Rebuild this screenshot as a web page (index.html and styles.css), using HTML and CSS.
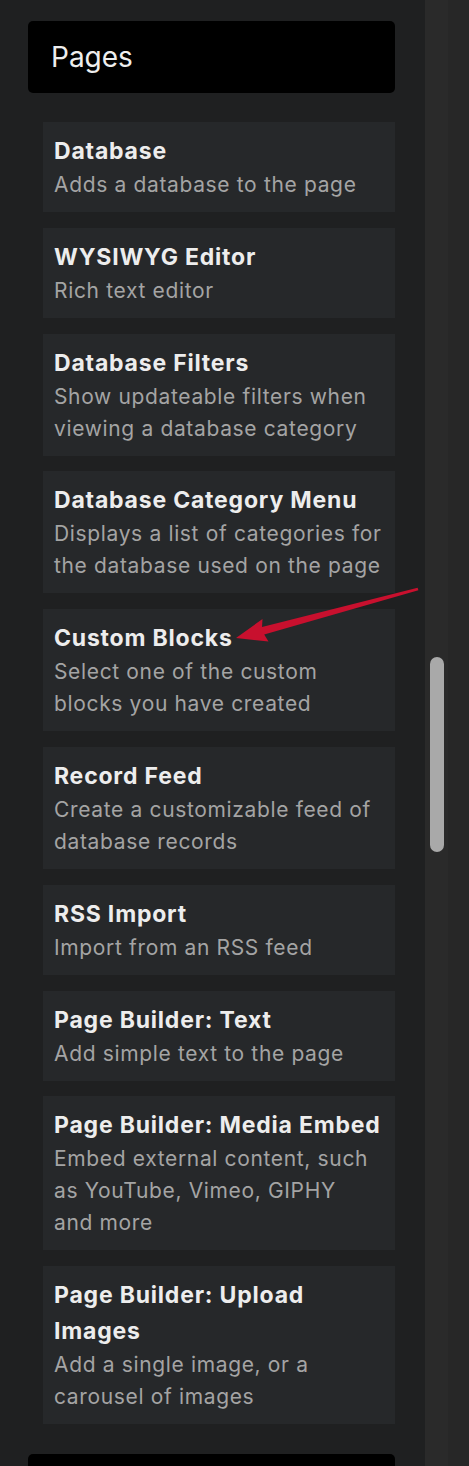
FILE: index.html
```html
<!DOCTYPE html>
<html lang="en">
<head>
<meta charset="utf-8">
<title>Pages</title>
<link rel="stylesheet" href="styles.css">
</head>
<body>
<div class="app">
  <aside class="sidebar">
    <div class="panel-head">Pages</div>
    <ul class="blocks">
      <li class="block"><div class="block-title">Database</div><div class="block-desc">Adds a database to the page</div></li>
      <li class="block"><div class="block-title">WYSIWYG Editor</div><div class="block-desc">Rich text editor</div></li>
      <li class="block"><div class="block-title">Database Filters</div><div class="block-desc">Show updateable filters when viewing a database category</div></li>
      <li class="block"><div class="block-title">Database Category Menu</div><div class="block-desc">Displays a list of categories for the database used on the page</div></li>
      <li class="block"><div class="block-title">Custom Blocks</div><div class="block-desc">Select one of the custom blocks you have created</div></li>
      <li class="block"><div class="block-title">Record Feed</div><div class="block-desc">Create a customizable feed of database records</div></li>
      <li class="block"><div class="block-title">RSS Import</div><div class="block-desc">Import from an RSS feed</div></li>
      <li class="block"><div class="block-title">Page Builder: Text</div><div class="block-desc">Add simple text to the page</div></li>
      <li class="block"><div class="block-title">Page Builder: Media Embed</div><div class="block-desc">Embed external content, such as YouTube, Vimeo, GIPHY and&nbsp;more</div></li>
      <li class="block"><div class="block-title">Page Builder: Upload Images</div><div class="block-desc">Add a single image, or a carousel of images</div></li>
    </ul>
    <div class="panel-head panel-next"></div>
  </aside>
  <div class="scroll-track"><div class="scroll-thumb"></div></div>
  <div class="edge"></div>
</div>
<svg class="annotation" width="469" height="1466" viewBox="0 0 469 1466" aria-hidden="true">
  <polygon fill="#c8102e" points="236,638 268.5,641.5 264.2,634.6 418.4,590.3 417.6,587.7 262,627 262.5,619"/>
</svg>
</body>
</html>
```
FILE: styles.css
```css
* { box-sizing: border-box; }
html, body { margin: 0; padding: 0; }
body {
  width: 469px;
  height: 1466px;
  overflow: hidden;
  background: #1f2021;
  font-family: Inter, "Noto Sans", sans-serif;
  position: relative;
}
.app {
  display: flex;
  height: 1466px;
}
.sidebar {
  width: 425px;
  flex: none;
  background: #1f2021;
  padding: 21px 30px 0 28px;
}
.panel-head {
  height: 72px;
  background: #000;
  border-radius: 5px;
  color: #eeeeee;
  font-size: 28px;
  font-weight: 400;
  display: flex;
  align-items: center;
  padding-left: 23px;
}
.panel-next {
  margin-top: 30px;
  border-radius: 5px 5px 0 0;
}
.blocks {
  list-style: none;
  margin: 29px 0 0 15px;
  padding: 0;
  display: flex;
  flex-direction: column;
  gap: 15.8px;
}
.block {
  background: #26282a;
  padding: 11px;
}
.block-title {
  color: #ededed;
  font-size: 23px;
  font-weight: 700;
  line-height: 36px;
  letter-spacing: 0.8px;
}
.block-desc {
  color: #a4a4a4;
  font-size: 21px;
  line-height: 32px;
  letter-spacing: 0.65px;
}
.scroll-track {
  width: 23px;
  flex: none;
  background: #2a2a2a;
  padding: 657px 4px 0 5px;
}
.scroll-thumb {
  width: 14px;
  height: 195px;
  border-radius: 7px;
  background: #a9a9a9;
}
.edge {
  flex: 1;
  background: #272727;
}
.annotation {
  position: absolute;
  left: 0;
  top: 0;
  pointer-events: none;
}
```
